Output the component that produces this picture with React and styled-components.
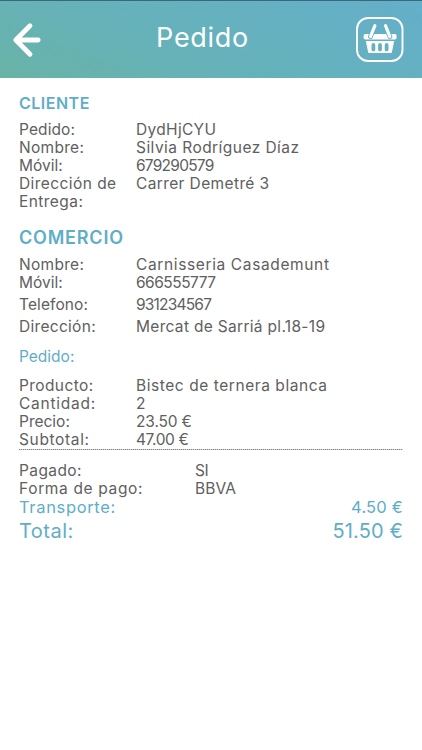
import React from 'react';
import styled, { createGlobalStyle } from 'styled-components';

const GlobalStyle = createGlobalStyle`
  * { box-sizing: border-box; }
  body { margin: 0; background: #fff; }
`;

const Screen = styled.div`
  min-height: 750px;
  background: #fff;
  color: #606060;
  font-family: Inter, "Open Sans", sans-serif;
  font-size: 15.5px;
  line-height: 18px;
`;

const Header = styled.header`
  display: grid;
  grid-template-columns: 60px 1fr 66px;
  align-items: center;
  height: 78px;
  border-top: 1px solid #3c687a;
  background: linear-gradient(22deg, #69b3a7 0%, #66b2b8 38%, #65b1bf 60%, #64afca 100%);
`;

const Title = styled.h1`
  margin: 0 11px 4px 0;
  color: #fff;
  font-size: 27px;
  font-weight: 400;
  line-height: 34px;
  letter-spacing: 0.7px;
  text-align: center;
`;

const IconButton = styled.button`
  display: flex;
  padding: 0;
  border: 0;
  background: none;
`;

const BackButton = styled(IconButton)`
  margin-left: 12px;
`;

const Content = styled.main`
  padding: 15px 19px 0;
`;

const SectionTitle = styled.h2`
  margin: ${({ $large }) => ($large ? '15px 0 6px' : '0 0 8px')};
  color: #5eaec7;
  font-size: ${({ $large }) => ($large ? 18 : 16)}px;
  font-weight: 600;
  line-height: ${({ $large }) => ($large ? 24 : 20)}px;
  letter-spacing: ${({ $large }) => ($large ? 0.8 : 0.5)}px;
`;

const Subtitle = styled.h3`
  margin: 12px 0 11px;
  color: #5eaec7;
  font-size: 15.5px;
  font-weight: 400;
  line-height: 18px;
`;

const Row = styled.div`
  display: grid;
  grid-template-columns: ${({ $wide }) => ($wide ? 176 : 117)}px 1fr;
  margin-top: ${({ $spaced }) => ($spaced ? 4 : 0)}px;
`;

const Text = styled.span`
  letter-spacing: ${({ $track = 0 }) => $track}px;
  white-space: pre-line;
`;

const Divider = styled.hr`
  height: 2px;
  margin: -1px 0 12px;
  border: 0;
  background: repeating-linear-gradient(90deg, #808080 0 1px, #d4d4d4 1px 2px);
  background-size: 100% 1px;
  background-position: 0 1px;
  background-repeat: no-repeat;
`;

const AmountRow = styled.div`
  display: flex;
  justify-content: space-between;
  margin-top: ${({ $total }) => ($total ? 3 : 0)}px;
  color: #5eaec7;
  font-size: ${({ $total }) => ($total ? 20 : 16.5)}px;
  line-height: ${({ $total }) => ($total ? 24 : 18)}px;
`;

function Field({ label, value, labelTrack, valueTrack, ...layout }) {
  return (
    <Row {...layout}>
      <Text $track={labelTrack}>{label}</Text>
      <Text $track={valueTrack}>{value}</Text>
    </Row>
  );
}

function ArrowIcon() {
  return (
    <svg width="30" height="36" viewBox="0 0 30 36" fill="none" stroke="#fff" strokeWidth="4.8" strokeLinecap="round" strokeLinejoin="round">
      <path d="M18 3.7 3.8 18 18 32.2M4 18h22.2" />
    </svg>
  );
}

function BasketIcon() {
  return (
    <svg width="48" height="46" viewBox="0 0 48 46" fill="none">
      <rect x="1" y="1" width="45.5" height="43" rx="11" stroke="#fff" strokeWidth="1.9" />
      <path fill="#fff" d="M9.3 17h29.6a1.7 1.7 0 0 1 1.7 1.7v2.1a1.7 1.7 0 0 1-1.7 1.7H9.3a1.7 1.7 0 0 1-1.7-1.7v-2.1A1.7 1.7 0 0 1 9.3 17ZM9.8 24.1h28.4l-2.5 11.8H12.3Z" />
      <path d="m18.9 8.7-4.4 11M29.5 8.7l4.4 11" stroke="#65b1c2" strokeWidth="4.8" strokeLinecap="round" />
      <path d="m18.9 8.7-4.4 11M29.5 8.7l4.4 11" stroke="#fff" strokeWidth="3.1" strokeLinecap="round" />
      <path d="M17.4 28v4.4M24 28v4.4M30.6 28v4.4" stroke="#65b1c2" strokeWidth="3.8" strokeLinecap="round" />
    </svg>
  );
}

export default function App() {
  return (
    <Screen>
      <GlobalStyle />
      <Header>
        <BackButton aria-label="Volver"><ArrowIcon /></BackButton>
        <Title>Pedido</Title>
        <IconButton aria-label="Cesta"><BasketIcon /></IconButton>
      </Header>
      <Content>
        <SectionTitle>CLIENTE</SectionTitle>
        <Field label="Pedido:" labelTrack={0.1} value="DydHjCYU" valueTrack={0.32} />
        <Field label="Nombre:" labelTrack={0.3} value="Silvia Rodríguez Díaz" valueTrack={0.45} />
        <Field label="Móvil:" value="679290579" valueTrack={-0.75} />
        <Field label={'Dirección de\nEntrega:'} labelTrack={0.43} value="Carrer Demetré 3" valueTrack={0.38} />

        <SectionTitle $large>COMERCIO</SectionTitle>
        <Field label="Nombre:" labelTrack={0.3} value="Carnisseria Casademunt" valueTrack={0.63} />
        <Field label="Móvil:" value="666555777" valueTrack={-0.5} />
        <Field $spaced label="Telefono:" labelTrack={0.1} value="931234567" valueTrack={-0.8} />
        <Field $spaced label="Dirección:" labelTrack={0.3} value="Mercat de Sarriá pl.18-19" valueTrack={0.31} />

        <Subtitle>Pedido:</Subtitle>
        <Field label="Producto:" labelTrack={0.4} value="Bistec de ternera blanca" valueTrack={0.56} />
        <Field label="Cantidad:" labelTrack={0.75} value="2" />
        <Field label="Precio:" value="23.50 €" valueTrack={-0.15} />
        <Field label="Subtotal:" labelTrack={0.65} value="47.00 €" valueTrack={-0.4} />
        <Divider />
        <Field $wide label="Pagado:" labelTrack={0.4} value="SI" valueTrack={-0.4} />
        <Field $wide label="Forma de pago:" labelTrack={0.65} value="BBVA" valueTrack={0.13} />
        <AmountRow>
          <Text $track={0.65}>Transporte:</Text>
          <Text $track={0.2}>4.50 €</Text>
        </AmountRow>
        <AmountRow $total>
          <Text $track={0.5}>Total:</Text>
          <Text $track={0.15}>51.50 €</Text>
        </AmountRow>
      </Content>
    </Screen>
  );
}
